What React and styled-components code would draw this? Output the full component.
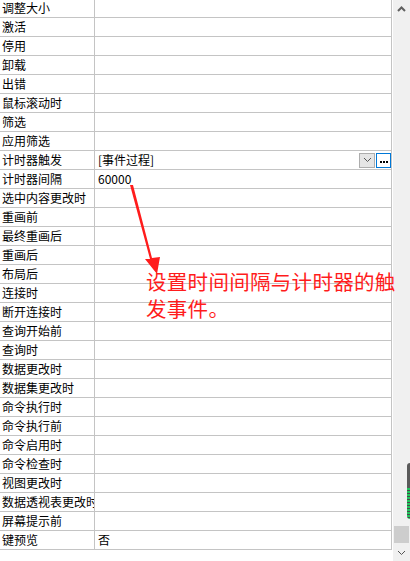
import React from "react";
import styled, { createGlobalStyle } from "styled-components";

const GlobalStyle = createGlobalStyle`
  html, body {
    margin: 0;
    padding: 0;
    background: #ffffff;
    overflow: hidden;
  }
  body {
    font-family: "Noto Sans CJK SC", "Noto Sans", sans-serif;
  }
`;

const Window = styled.div`
  position: relative;
  display: flex;
  width: 410px;
  height: 561px;
  overflow: hidden;
  background: #ffffff;
`;

const Sheet = styled.div`
  width: 392px;
  border-right: 1px solid #c4c4c4;
  margin-top: -1px;
  align-self: flex-start;
`;

const Row = styled.div`
  display: flex;
  height: 18px;
  border-bottom: 1px solid #c4c4c4;
  font-size: 12px;
  color: #000000;
`;

const Label = styled.div`
  width: 95px;
  flex: none;
  border-right: 1px solid #c4c4c4;
  padding-left: 2px;
  box-sizing: border-box;
  white-space: nowrap;
  overflow: hidden;
  line-height: 18px;
`;

const Value = styled.div`
  flex: 1;
  display: flex;
  align-items: center;
  padding-left: 3px;
  line-height: 18px;
  white-space: nowrap;
`;

const ValueText = styled.span`
  flex: 1;
`;

const DropButton = styled.div`
  width: 16px;
  height: 15px;
  box-sizing: border-box;
  background: #e5e5e5;
  border: 1px solid #adadad;
  display: flex;
  align-items: center;
  justify-content: center;
  margin-right: 1px;
`;

const MoreButton = styled.div`
  width: 15px;
  height: 15px;
  box-sizing: border-box;
  background: #ffffff;
  border: 1px solid #0078d7;
  display: flex;
  align-items: center;
  justify-content: center;
  gap: 1px;
  padding-top: 3px;
`;

const Dot = styled.span`
  width: 2px;
  height: 2px;
  background: #000000;
`;

const Scrollbar = styled.div`
  position: relative;
  width: 17px;
  margin-left: 1px;
  background: #f0f0f0;
  display: flex;
  flex-direction: column;
  align-items: center;
`;

const ArrowBox = styled.div`
  height: 17px;
  width: 17px;
  display: flex;
  align-items: center;
  justify-content: center;
`;

const Track = styled.div`
  flex: 1;
  width: 100%;
  display: flex;
  flex-direction: column;
  justify-content: flex-end;
  align-items: center;
`;

const Thumb = styled.div`
  width: 15px;
  height: 17px;
  background: #cdcdcd;
  margin-bottom: 1px;
`;

const Gadget = styled.div`
  position: absolute;
  right: 0;
  top: 463px;
  width: 3px;
  height: 56px;
  background: linear-gradient(
    to bottom,
    #5a5a5a 0,
    #5a5a5a 25px,
    transparent 25px
  );
  border-radius: 3px 0 0 3px;
  overflow: hidden;

  &::after {
    content: "";
    position: absolute;
    top: 25px;
    left: 0;
    right: 0;
    bottom: 0;
    background: repeating-linear-gradient(
      to bottom,
      #22c55e 0,
      #22c55e 2px,
      #4a4a4a 2px,
      #4a4a4a 3px
    );
  }
`;

const Note = styled.div`
  position: absolute;
  left: 146px;
  top: 268px;
  width: 258px;
  font-size: 20.5px;
  line-height: 27px;
  color: #ff1c1c;
  letter-spacing: 0.3px;
`;

const Pointer = styled.svg`
  position: absolute;
  left: 0;
  top: 0;
  pointer-events: none;
`;

const labels = [
  "调整大小",
  "激活",
  "停用",
  "卸载",
  "出错",
  "鼠标滚动时",
  "筛选",
  "应用筛选",
  "计时器触发",
  "计时器间隔",
  "选中内容更改时",
  "重画前",
  "最终重画后",
  "重画后",
  "布局后",
  "连接时",
  "断开连接时",
  "查询开始前",
  "查询时",
  "数据更改时",
  "数据集更改时",
  "命令执行时",
  "命令执行前",
  "命令启用时",
  "命令检查时",
  "视图更改时",
  "数据透视表更改时",
  "屏幕提示前",
  "键预览",
];

const values = {
  计时器间隔: "60000",
  键预览: "否",
};

const Chevron = ({ up }) => (
  <svg width="9" height="6" viewBox="0 0 9 6">
    <path
      d={up ? "M1 5 L4.5 1.5 L8 5" : "M1 1 L4.5 4.5 L8 1"}
      fill="none"
      stroke={up ? "#606060" : "#555"}
      strokeWidth={up ? 2 : 1}
    />
  </svg>
);

export default function App() {
  return (
    <Window>
      <GlobalStyle />
      <Sheet>
        {labels.map((label) => (
          <Row key={label}>
            <Label>{label}</Label>
            {label === "计时器触发" ? (
              <Value>
                <ValueText>[事件过程]</ValueText>
                <DropButton>
                  <Chevron />
                </DropButton>
                <MoreButton>
                  <Dot />
                  <Dot />
                  <Dot />
                </MoreButton>
              </Value>
            ) : (
              <Value>{values[label] || ""}</Value>
            )}
          </Row>
        ))}
      </Sheet>
      <Scrollbar>
        <ArrowBox>
          <Chevron up />
        </ArrowBox>
        <Track>
          <Thumb />
        </Track>
        <ArrowBox>
          <Chevron up={false} />
        </ArrowBox>
        <Gadget />
      </Scrollbar>
      <Pointer width="410" height="561">
        <polygon
          points="130,185 133,185 152,258 160,257 157,274 145,259 150,259"
          fill="#ff1c1c"
        />
      </Pointer>
      <Note>设置时间间隔与计时器的触发事件。</Note>
    </Window>
  );
}
